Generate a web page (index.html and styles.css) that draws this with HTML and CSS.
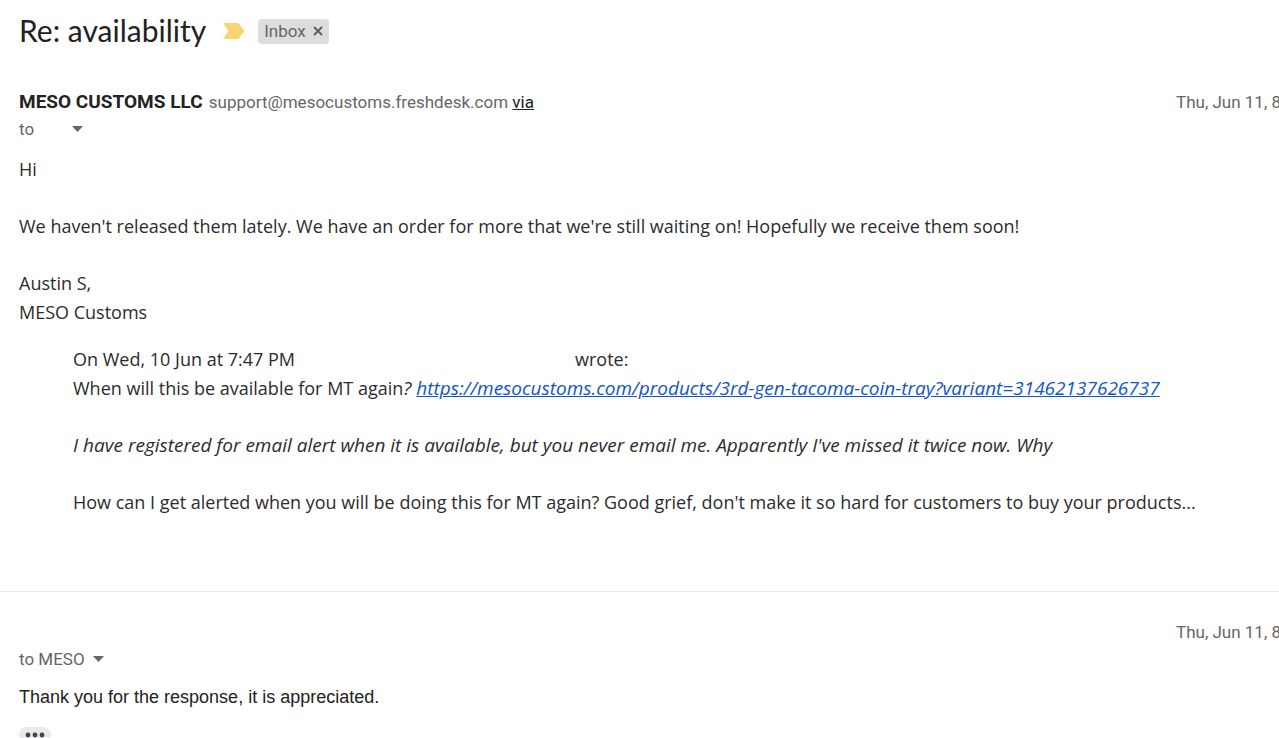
FILE: index.html
```html
<!DOCTYPE html>
<html lang="en">
<head>
<meta charset="utf-8">
<title>Re: availability</title>
<link rel="stylesheet" href="styles.css">
</head>
<body>
<main class="thread">
  <header class="subject">
    <h1 class="subject-title">Re: availability</h1>
    <button class="marker" type="button" aria-label="Important">
      <svg width="22" height="16" viewBox="0 0 22 16"><path d="M1 0H14Q15.500 0 16.500 1.200L21.500 8L16.500 14.800Q15.500 16 14 16H1Q0 16 .500 15L5.500 8L.500 1Q0 0 1 0Z" fill="#f9d473"/></svg>
    </button>
    <span class="label">Inbox
      <button class="label-remove" type="button" aria-label="Remove label">
        <svg width="10" height="10" viewBox="0 0 10 10"><path d="M1 1L9 9M9 1L1 9" stroke="#5b5b5b" stroke-width="1.800"/></svg>
      </button>
    </span>
  </header>

  <article class="message">
    <div class="meta">
      <div class="sender"><strong class="sender-name">MESO CUSTOMS LLC</strong> <span class="sender-mail">support@mesocustoms.freshdesk.com</span> <a class="via" href="#">via</a></div>
      <time class="date">Thu, Jun 11, 8</time>
    </div>
    <div class="recipient recipient-hidden">
      <span>to</span>
      <button class="details" type="button" aria-label="Show details"><svg width="11" height="6" viewBox="0 0 11 6"><path d="M0 0H11L5.500 6Z" fill="#666"/></svg></button>
    </div>
    <div class="body">
      <p>Hi</p>
      <p>We haven't released them lately. We have an order for more that we're still waiting on! Hopefully we receive them soon!</p>
      <p>Austin S,<br>MESO Customs</p>
      <blockquote class="quote">
        <div class="quote-intro"><span>On Wed, 10 Jun at 7:47 PM</span><span>wrote:</span></div>
        <p>When will this be available for MT again<em>? <a class="link" href="#">https://mesocustoms.com/products/3rd-gen-tacoma-coin-tray?variant=31462137626737</a></em></p>
        <p><em>I have registered for email alert when it is available, but you never email me. Apparently I've missed it twice now. Why</em></p>
        <p>How can I get alerted when you will be doing this for MT again? Good grief, don't make it so hard for customers to buy your products...</p>
      </blockquote>
    </div>
  </article>

  <article class="message reply">
    <div class="meta"><div class="sender"></div><time class="date">Thu, Jun 11, 8</time></div>
    <div class="recipient">
      <span>to MESO</span>
      <button class="details" type="button" aria-label="Show details"><svg width="11" height="6" viewBox="0 0 11 6"><path d="M0 0H11L5.500 6Z" fill="#666"/></svg></button>
    </div>
    <p class="reply-text">Thank you for the response, it is appreciated.</p>
    <button class="trimmed" type="button" aria-label="Show trimmed content"><svg width="20" height="6" viewBox="0 0 20 6"><g fill="#444"><circle cx="3" cy="3" r="2.400"/><circle cx="10" cy="3" r="2.400"/><circle cx="17" cy="3" r="2.400"/></g></svg></button>
  </article>
</main>
</body>
</html>
```
FILE: styles.css
```css
* { box-sizing: border-box; }
html, body { height: 100%; }
body { margin: 0; background: #fff; color: #222; font-family: Roboto, sans-serif; }
button { border: 0; padding: 0; background: none; color: inherit; font: inherit; display: flex; align-items: center; justify-content: center; }
p, h1, blockquote { margin: 0; }
.thread { height: 100%; overflow: hidden; }
.subject { display: flex; align-items: center; padding: 10px 19px 0; height: 52px; }
.subject-title { padding-bottom: 2px; font-family: Lato, sans-serif; font-size: 30px; line-height: 40px; font-weight: 400; }
.marker { margin: 0 13px 0 17px; }
.label { display: flex; align-items: center; gap: 7px; height: 25px; padding: 0 6px; border-radius: 4px; background: #ddd; color: #666; font-size: 17px; }
.message { padding: 36px 0 74px 19px; white-space: nowrap; }
.meta { display: flex; justify-content: space-between; height: 28px; line-height: 28px; font-size: 17px; color: #666; }
.sender-name { margin-right: 2px; font-size: 19px; color: #222; }
.via { color: #222; }
.date { flex: none; width: 103px; }
.recipient { display: flex; align-items: center; gap: 8px; height: 26px; font-size: 17px; color: #666; }
.recipient-hidden { gap: 38px; }
.body { padding-top: 13px; color: #2c2c2c; font-family: "Open Sans", sans-serif; font-size: 18px; line-height: 29px; }
.body em { font-size: 19px; line-height: 1; }
.body p + p { margin-top: 28px; }
.quote { padding: 18px 0 0 54px; }
.quote-intro { display: flex; gap: 280px; }
.link { color: #15c; }
.reply { border-top: 1px solid #e8e8e8; padding-top: 26px; padding-bottom: 0; }
.reply-text { margin-top: 13px; font-family: "Liberation Sans", sans-serif; font-size: 18px; line-height: 24px; }
.trimmed { margin-top: 18px; width: 32px; height: 15px; border-radius: 8px; background: #e8eaed; }
```
